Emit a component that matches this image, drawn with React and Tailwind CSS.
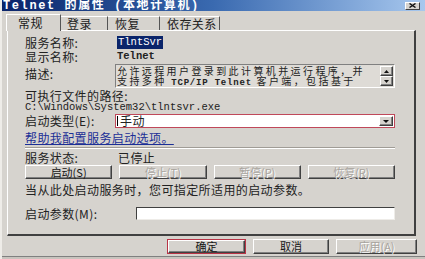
import React from 'react';

const cjk = "font-['Noto_Sans_CJK_SC',sans-serif]";
const mono = "font-['Liberation_Mono','Noto_Sans_CJK_SC',monospace]";

// raised win2k button
const Btn = ({ children, disabled, className = '' }) => (
  <div
    className={`flex items-center justify-center bg-[#d6d3ce] border border-t-white border-l-white border-r-[#404040] border-b-[#404040] shadow-[inset_-1px_-1px_0_#808080] text-[11px] leading-none ${cjk} ${
      disabled ? 'text-[#a8a49e] [text-shadow:1px_1px_0_#fff]' : 'text-[#161616]'
    } ${className}`}
  >
    {children}
  </div>
);

const Label = ({ children, className = '' }) => (
  <span className={`text-[12px] leading-none tracking-[0.4px] text-[#222] ${cjk} ${className}`}>
    {children}
  </span>
);

const tabs = [
  { name: '常规', w: 'w-[55px]', pl: 'pl-[11px]', active: true },
  { name: '登录', w: 'w-[47px]', pl: 'pl-[6px]' },
  { name: '恢复', w: 'w-[52px]', pl: 'pl-[7px]' },
  { name: '依存关系', w: 'w-[60px]', pl: 'pl-[7px]' },
];

const App = () => {
  return (
    <div className="w-[425px] h-[259px] bg-[#d6d3ce] flex flex-col overflow-hidden border-l-2 border-l-[#eeece8]">
      {/* title bar */}
      <div className="h-[11px] flex items-center justify-between bg-gradient-to-r from-[#0a246a] via-[#3a6ab0] to-[#a8c8ee] pl-[1px] pr-[5px] overflow-hidden">
        <span className={`text-white text-[12px] leading-none font-bold tracking-[1.6px] whitespace-nowrap ${mono}`}>
          Telnet 的属性 (本地计算机)
        </span>
        <div className="w-[15px] h-[8px] bg-[#d6d3ce] border border-t-white border-l-white border-r-[#404040] border-b-[#404040] flex items-center justify-center">
          <svg width="7" height="5" viewBox="0 0 7 5">
            <path d="M0.5 0.5 L6.5 4.5 M6.5 0.5 L0.5 4.5" stroke="#111" strokeWidth="1.4" />
          </svg>
        </div>
      </div>

      {/* tabs */}
      <div className="h-[19px] flex items-end pl-[4px]">
        {tabs.map((t) => (
          <div
            key={t.name}
            className={`${t.w} ${t.pl} flex items-center bg-[#d6d3ce] border-t border-t-white border-r border-r-[#555] ${
              t.active
                ? 'h-[17px] border-l border-l-white relative z-10 -mb-px pb-[1px]'
                : 'h-[14px]'
            }`}
          >
            <Label>{t.name}</Label>
          </div>
        ))}
      </div>

      {/* panel */}
      <div className="ml-[5px] w-[409px] h-[206px] border border-t-white border-l-white border-r-2 border-r-[#404040] border-b-2 border-b-[#404040] flex flex-col pl-[17px] pr-[19px] pt-[5px]">
        <div className="h-[13px] flex items-center">
          <Label className="w-[92px]">服务名称:</Label>
          <span className={`bg-[#0a246a] text-white text-[10.5px] leading-none px-[1px] py-[1px] ${mono}`}>TlntSvr</span>
        </div>
        <div className="h-[13px] mt-[1px] flex items-center">
          <Label className="w-[92px]">显示名称:</Label>
          <span className={`text-[#222] text-[10.5px] leading-none font-bold ${mono}`}>Telnet</span>
        </div>
        <div className="h-[24px] mt-[1px] flex items-start">
          <Label className="w-[90px] mt-[4px]">描述:</Label>
          <div className="flex-1 h-full flex bg-[#dedbd6] border border-t-[#808080] border-l-[#808080] border-r-white border-b-white overflow-hidden">
            <div className="flex-1 pl-[1px] pt-[1px] overflow-hidden">
              <div className={`text-[10px] leading-[10px] tracking-[2.4px] text-[#222] whitespace-nowrap ${cjk}`}>
                <div>允许远程用户登录到此计算机并运行程序，并</div>
                <div>
                  支持多种 <span className={`text-[9px] tracking-[0.8px] font-bold ${mono}`}>TCP/IP Telnet</span> 客户端，包括基于
                </div>
              </div>
            </div>
            <div className="w-[14px] flex flex-col pt-[1px] pr-[1px]">
              <Btn className="h-[10px]">
                <svg width="5" height="3" viewBox="0 0 5 3"><path d="M2.5 0 L5 3 L0 3 Z" fill="#111" /></svg>
              </Btn>
              <Btn className="h-[10px]">
                <svg width="5" height="3" viewBox="0 0 5 3"><path d="M0 0 L5 0 L2.5 3 Z" fill="#111" /></svg>
              </Btn>
            </div>
          </div>
        </div>
        <div className="h-[12px] mt-[2px] flex items-center">
          <Label>可执行文件的路径:</Label>
        </div>
        <div className={`h-[10px] flex items-center text-[10.5px] leading-[10px] text-[#222] whitespace-nowrap ${mono}`}>
          C:\Windows\System32\tlntsvr.exe
        </div>
        <div className="h-[14px] mt-[2px] flex items-center">
          <Label className="w-[90px]">启动类型(E):</Label>
          <div className="flex-1 h-full flex items-center bg-white border border-[#c0485a] pl-[1px] pr-[1px]">
            <div className="w-[1px] h-[10px] bg-black mr-[2px]" />
            <Label className="flex-1">手动</Label>
            <Btn className="w-[14px] h-[10px]">
              <svg width="6" height="3" viewBox="0 0 6 3"><path d="M0 0 L6 0 L3 3 Z" fill="#111" /></svg>
            </Btn>
          </div>
        </div>
        <div className="h-[11px] mt-[4px] flex items-center">
          <span className={`text-[12px] leading-none tracking-[0.4px] text-[#1c2f96] underline ${cjk}`}>
            帮助我配置服务启动选项。
          </span>
        </div>
        <div className="h-[2px] mt-[4px] border-t border-t-[#a09c96] border-b border-b-white" />
        <div className="h-[12px] mt-[3px] flex items-center">
          <Label className="w-[93px]">服务状态:</Label>
          <Label>已停止</Label>
        </div>
        <div className="h-[14px] mt-[1px] grid grid-cols-4 gap-x-[7px]">
          <Btn>启动(S)</Btn>
          <Btn disabled>停止(T)</Btn>
          <Btn disabled>暂停(P)</Btn>
          <Btn disabled>恢复(R)</Btn>
        </div>
        <div className="h-[12px] mt-[5px] flex items-center">
          <Label>当从此处启动服务时，您可指定所适用的启动参数。</Label>
        </div>
        <div className="h-[13px] mt-[11px] flex items-center">
          <Label className="w-[111px]">启动参数(M):</Label>
          <div className="flex-1 h-full bg-white border border-t-[#404040] border-l-[#404040] border-r-[#eeece8] border-b-[#eeece8]" />
        </div>
      </div>

      {/* dialog buttons */}
      <div className="h-[15px] mt-[3px] flex justify-end gap-x-[7px] pr-[8px]">
        <div className="w-[79px] h-full border border-[#b83446] flex">
          <Btn className="flex-1">确定</Btn>
        </div>
        <Btn className="w-[76px]">取消</Btn>
        <Btn disabled className="w-[81px]">应用(A)</Btn>
      </div>
      <div className="mt-auto h-[3px] border-t border-t-[#808080] bg-[#c8c4be]" />
    </div>
  );
};

export default App;
